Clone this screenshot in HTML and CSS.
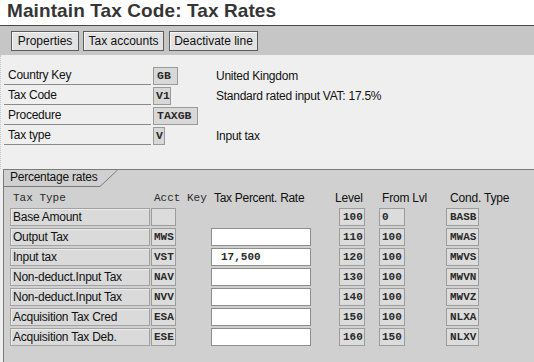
FILE: index.html
```html
<!DOCTYPE html>
<html lang="en">
<head>
    <meta charset="UTF-8">
    <title>Maintain Tax Code: Tax Rates</title>
    <link rel="stylesheet" href="styles.css">
</head>
<body>
    <h1 class="title">Maintain Tax Code: Tax Rates</h1>

    <div class="toolbar">
        <button type="button" class="btn btn-props">Properties</button>
        <button type="button" class="btn btn-accts">Tax accounts</button>
        <button type="button" class="btn btn-deact">Deactivate line</button>
    </div>

    <div class="head">
        <div class="head-row">
            <span class="lbl">Country Key</span>
            <span class="cell"><span class="field f-country">GB</span></span>
            <span class="desc">United Kingdom</span>
        </div>
        <div class="head-row">
            <span class="lbl">Tax Code</span>
            <span class="cell"><span class="field f-code">V1</span></span>
            <span class="desc">Standard rated input VAT: 17.5%</span>
        </div>
        <div class="head-row">
            <span class="lbl">Procedure</span>
            <span class="cell"><span class="field f-proc">TAXGB</span></span>
            <span class="desc"></span>
        </div>
        <div class="head-row">
            <span class="lbl">Tax type</span>
            <span class="cell"><span class="field f-type">V</span></span>
            <span class="desc">Input tax</span>
        </div>
    </div>

    <div class="group">
        <div class="tab">
            <span class="tab-label">Percentage rates</span>
            <svg class="tab-edge" width="18" height="17" viewBox="0 0 18 17">
                <line x1="0" y1="16.5" x2="17.5" y2="0" stroke="#7a7a7a" stroke-width="1"/>
            </svg>
        </div>

        <div class="cols">
            <span class="col-h h-type">Tax Type</span>
            <span class="col-h h-acct">Acct Key</span>
            <span class="col-h h-rate">Tax Percent. Rate</span>
            <span class="col-h h-lvl">Level</span>
            <span class="col-h h-from">From Lvl</span>
            <span class="col-h h-cond">Cond. Type</span>
        </div>

        <div class="rows">
            <div class="rate-row">
                <span class="type">Base Amount</span>
                <span class="code acct"></span>
                <span class="rate blank"></span>
                <span class="code lvl">100</span>
                <span class="code from">0</span>
                <span class="code cond">BASB</span>
            </div>
            <div class="rate-row">
                <span class="type">Output Tax</span>
                <span class="code acct">MWS</span>
                <span class="rate"></span>
                <span class="code lvl">110</span>
                <span class="code from">100</span>
                <span class="code cond">MWAS</span>
            </div>
            <div class="rate-row">
                <span class="type">Input tax</span>
                <span class="code acct">VST</span>
                <span class="rate">17,500</span>
                <span class="code lvl">120</span>
                <span class="code from">100</span>
                <span class="code cond">MWVS</span>
            </div>
            <div class="rate-row">
                <span class="type">Non-deduct.Input Tax</span>
                <span class="code acct">NAV</span>
                <span class="rate"></span>
                <span class="code lvl">130</span>
                <span class="code from">100</span>
                <span class="code cond">MWVN</span>
            </div>
            <div class="rate-row">
                <span class="type">Non-deduct.Input Tax</span>
                <span class="code acct">NVV</span>
                <span class="rate"></span>
                <span class="code lvl">140</span>
                <span class="code from">100</span>
                <span class="code cond">MWVZ</span>
            </div>
            <div class="rate-row">
                <span class="type">Acquisition Tax Cred</span>
                <span class="code acct">ESA</span>
                <span class="rate"></span>
                <span class="code lvl">150</span>
                <span class="code from">100</span>
                <span class="code cond">NLXA</span>
            </div>
            <div class="rate-row">
                <span class="type">Acquisition Tax Deb.</span>
                <span class="code acct">ESE</span>
                <span class="rate"></span>
                <span class="code lvl">160</span>
                <span class="code from">150</span>
                <span class="code cond">NLXV</span>
            </div>
        </div>
    </div>
</body>
</html>
```

FILE: styles.css
```css
body {
    margin: 0;
    width: 534px;
    height: 362px;
    overflow: hidden;
    background-color: #efefef;
    font-family: "Liberation Sans", Arial, sans-serif;
    font-size: 12px;
    color: #111111;
}
.title {
    margin: 0;
    height: 25px;
    padding-left: 7px;
    background-color: #ffffff;
    color: #353535;
    font-size: 19px;
    font-weight: bold;
    line-height: 22px;
    letter-spacing: 0.1px;
    border-bottom: 1px solid #4a4a4a;
}
.toolbar {
    display: flex;
    gap: 4px;
    height: 29px;
    padding: 5px 0 0 11px;
    box-sizing: border-box;
    background-color: #c6c6c6;
}
.btn {
    height: 20px;
    padding: 0;
    font-family: "Liberation Sans", Arial, sans-serif;
    font-size: 12px;
    color: #111111;
    background-color: #e2e2e2;
    border: 1px solid #5c5c5c;
    box-shadow: inset 1px 1px #f6f6f6;
}
.btn-props { width: 68px; }
.btn-accts { width: 81px; }
.btn-deact { width: 89px; margin-left: 1px; }

/* header fields */
.head {
    display: flex;
    flex-direction: column;
    gap: 2px;
    padding: 12px 0 24px 3px;
    border-left: 1px dotted #c8c8c8;
}
.head-row {
    display: grid;
    grid-template-columns: 147px 61px 1fr;
    column-gap: 2px;
    height: 18px;
    letter-spacing: -0.25px;
}
.lbl {
    height: 17px;
    line-height: 17px;
    padding-left: 4px;
    border-bottom: 1px solid #8a8a8a;
}
.field {
    display: inline-block;
    height: 18px;
    box-sizing: border-box;
    padding-left: 3px;
    line-height: 16px;
    font-family: "Liberation Mono", monospace;
    font-size: 11.5px;
    font-weight: bold;
    letter-spacing: 0;
    color: #2a2a2a;
    background-color: #d8d8d8;
    border: 1px solid #9a9a9a;
}
.f-country { width: 25px; }
.f-code { width: 18px; padding-left: 2px; }
.f-proc { width: 45px; }
.f-type { width: 12px; padding-left: 2px; }
.desc {
    line-height: 18px;
}

/* percentage rates group */
.group {
    margin-left: 3px;
    height: 200px;
    background-color: #d0d0d0;
    border-top: 1px solid #7a7a7a;
    border-left: 1px solid #7a7a7a;
}
.tab {
    display: flex;
    height: 17px;
}
.tab-label {
    width: 90px;
    height: 16px;
    line-height: 15px;
    padding-left: 6px;
    border-bottom: 1px solid #7a7a7a;
    letter-spacing: -0.25px;
}
.cols {
    display: flex;
    height: 14px;
    margin-top: 4px;
    line-height: 14px;
    white-space: nowrap;
}
.col-h { display: block; }
.h-type, .h-acct {
    font-family: "Liberation Mono", monospace;
    font-size: 11px;
    color: #2a2a2a;
}
.h-type { width: 141px; margin-left: 9px; }
.h-acct { width: 60px; }
.h-rate { width: 121px; letter-spacing: -0.3px; }
.h-lvl { width: 47px; letter-spacing: -0.2px; }
.h-from { width: 68px; letter-spacing: -0.2px; }
.h-cond { letter-spacing: -0.2px; }

.rows {
    display: flex;
    flex-direction: column;
    gap: 2px;
    margin-top: 3px;
    padding-left: 6px;
}
.rate-row {
    display: flex;
    height: 18px;
}
.rate-row > span {
    display: block;
    height: 18px;
    box-sizing: border-box;
    line-height: 16px;
    white-space: nowrap;
}
.type {
    width: 140px;
    padding-left: 2px;
    background-color: #dadada;
    border: 1px solid #a2a2a2;
    box-shadow: inset 1px 1px #ececec;
    letter-spacing: -0.25px;
}
.code {
    font-family: "Liberation Mono", monospace;
    font-size: 11px;
    font-weight: bold;
    padding-left: 2px;
    background-color: #dcdcdc;
    border: 1px solid #9c9c9c;
    color: #2a2a2a;
}
.acct { width: 25px; margin-left: 1px; }
.rate {
    width: 100px;
    margin-left: 35px;
    padding-left: 9px;
    font-family: "Liberation Mono", monospace;
    font-size: 11px;
    font-weight: bold;
    color: #2a2a2a;
    background-color: #ffffff;
    border: 1px solid #8e8e8e;
}
.rate.blank {
    visibility: hidden;
}
.lvl { width: 26px; margin-left: 28px; padding-left: 3px; }
.from { width: 26px; margin-left: 14px; }
.cond { width: 33px; margin-left: 41px; padding-left: 3px; }
```
